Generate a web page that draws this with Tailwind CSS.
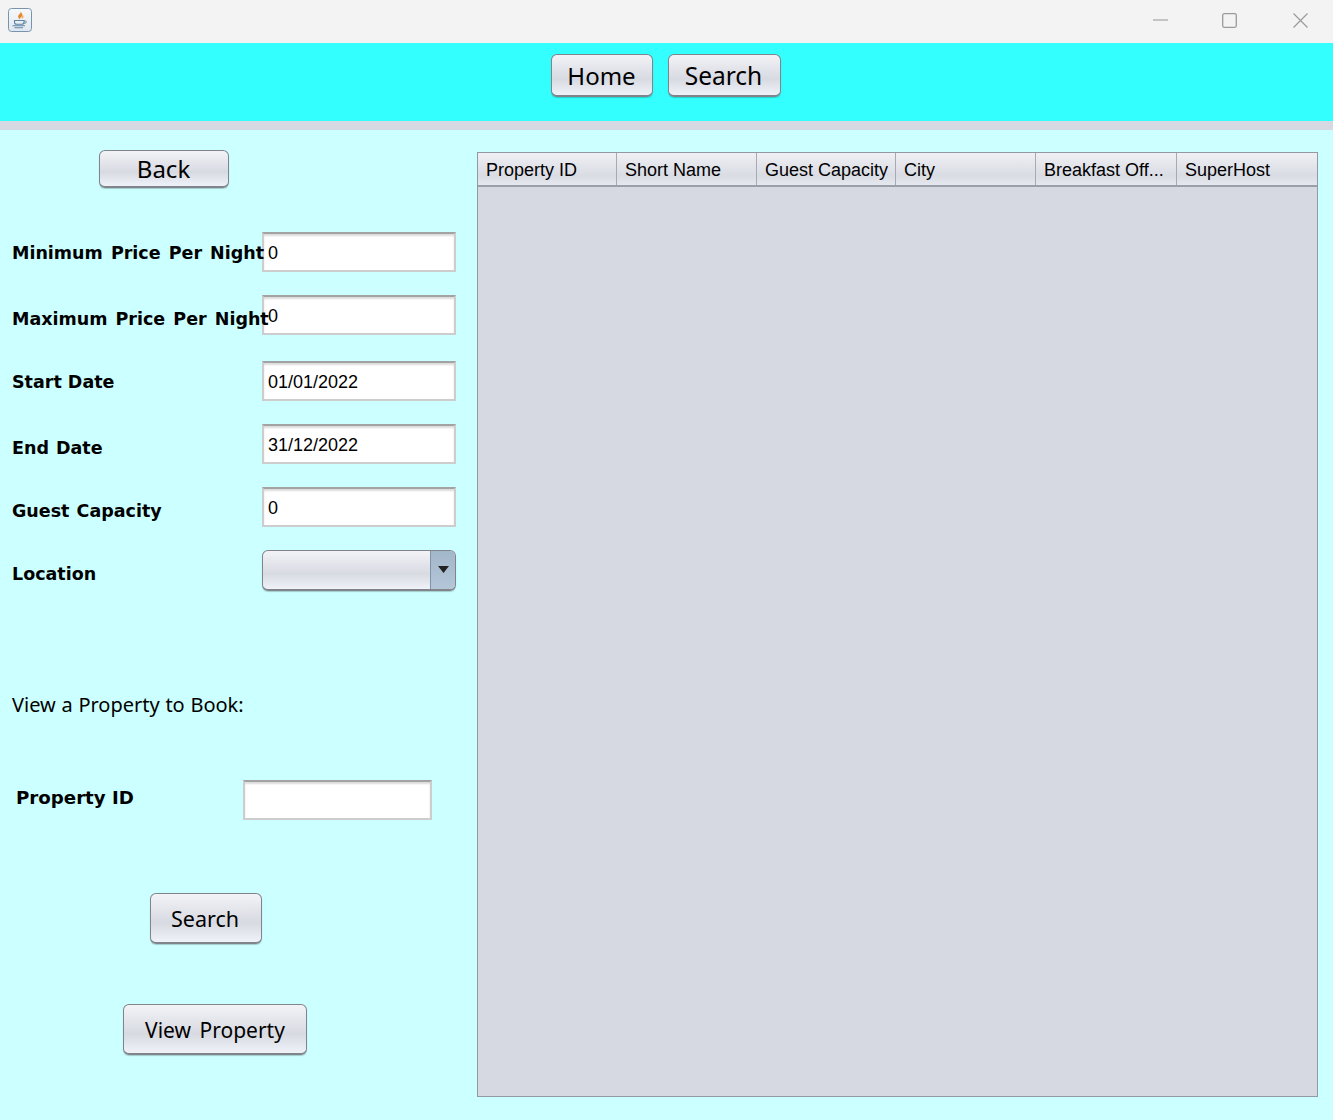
<!DOCTYPE html>
<html lang="en">
<head>
  <meta charset="UTF-8" />
  <title>Search Properties</title>
  <script src="https://cdn.jsdelivr.net/npm/@tailwindcss/browser@4"></script>
</head>
<body class="h-[1120px] w-[1333px] overflow-hidden bg-[#ccffff] font-['Noto_Sans',sans-serif] text-black">

  <!-- window title bar -->
  <div class="flex h-[43px] items-center justify-between bg-[#f3f3f3] pl-[8px] pr-[25px] pb-[3px]">
    <svg class="mb-[1px]" width="24" height="24" viewBox="0 0 24 24">
      <defs>
        <linearGradient id="tile" x1="0" y1="0" x2="0" y2="1"><stop offset="0" stop-color="#f7f9fb" /><stop offset="1" stop-color="#dfe7ee" /></linearGradient>
      </defs>
      <rect x="0.500" y="0.500" width="23" height="23" rx="3" fill="url(#tile)" stroke="#7793ad" />
      <path d="M12.500 3.500c1.200 1.800-2.800 3-2.300 5.500.2 1 .9 1.800 1.500 2.500-.2-1.800 3.300-3 2.500-5.300-.3-1-1-2-1.700-2.700z" fill="#e8862a" />
      <path d="M14.500 6.500c.8 1-1.200 2-.9 3.300.1.500.4 1 .7 1.300 0-1 1.600-1.800 1.200-3.100-.1-.6-.5-1.100-1-1.500z" fill="#f0a65a" />
      <path d="M6.500 12.500h9.500v1.800c0 1.200-1 2-2.200 2H8.700c-1.200 0-2.200-.8-2.200-2z" fill="none" stroke="#5f84a6" stroke-width="1.100" />
      <path d="M16 13h1.300c1.500 0 1.400 2.200-.5 2.200H15.500" fill="none" stroke="#5f84a6" stroke-width="1" />
      <path d="M4.500 17.800h12.500M6.500 19.800h8.500" stroke="#5f84a6" stroke-width="1.100" fill="none" />
    </svg>
    <div class="flex items-center">
      <svg width="15" height="2" viewBox="0 0 15 2"><path d="M0 1h15" stroke="#a3a3a3" stroke-width="1.200" /></svg>
      <svg class="ml-[54px]" width="15" height="15" viewBox="0 0 15 15"><rect x="0.700" y="0.700" width="13.600" height="13.600" rx="1.500" fill="none" stroke="#9a9a9a" stroke-width="1.300" /></svg>
      <svg class="ml-[56px]" width="15" height="15" viewBox="0 0 15 15"><path d="M0.500 0.500l14 14M14.500 0.500l-14 14" stroke="#9a9a9a" stroke-width="1.200" fill="none" /></svg>
    </div>
  </div>

  <!-- top nav -->
  <div class="flex h-[78px] items-start justify-center gap-[15px] bg-[#33ffff] pt-[11px] pr-[2px]">
    <button class="h-[43px] w-[102px] rounded-[6px] border border-b-2 border-[#80858c] bg-linear-to-b from-[#f3f3f7] via-[#d8dae2] via-60% to-[#f0f2fa] pt-[2px] text-[24px] leading-none shadow-[0_1px_1px_#0003]">Home</button>
    <button class="h-[43px] w-[113px] rounded-[6px] border border-b-2 border-[#80858c] bg-linear-to-b from-[#f3f3f7] via-[#d8dae2] via-60% to-[#f0f2fa] pt-[2px] pr-[1px] text-[24.500px] leading-none shadow-[0_1px_1px_#0003]">Search</button>
  </div>
  <div class="h-[9px] bg-[#d6d9e2]"></div>

  <main class="flex h-[990px]">
    <!-- filters -->
    <section class="w-[477px] shrink-0 pt-[20px]">
      <button class="ml-[99px] block h-[38px] w-[130px] rounded-[6px] border border-b-2 border-[#80858c] bg-linear-to-b from-[#f3f3f7] via-[#d8dae2] via-60% to-[#f0f2fa] pt-[1px] pr-[1px] text-[24px] leading-none shadow-[0_1px_1px_#0003]">Back</button>

      <div class="mt-[44px] flex h-[40px] items-center pl-[12px]">
        <label class="relative z-10 w-[250px] shrink-0 whitespace-nowrap pt-[2px] font-['DejaVu_Sans',sans-serif] text-[17.500px] font-bold [word-spacing:2px]">Minimum Price Per Night</label>
        <div class="flex h-[40px] w-[194px] items-center border-2 border-[#cdcdcd] border-t-[#a3a3a3] bg-white pl-[4px] pt-[2px] font-['Liberation_Sans',sans-serif] text-[18px] shadow-[inset_0_2px_2px_#dcdcdc]">0</div>
      </div>

      <div class="mt-[23px] flex h-[40px] items-center pl-[12px]">
        <label class="relative z-10 w-[250px] shrink-0 whitespace-nowrap pt-[8px] font-['DejaVu_Sans',sans-serif] text-[17.500px] font-bold [word-spacing:2px]">Maximum Price Per Night</label>
        <div class="flex h-[40px] w-[194px] items-center border-2 border-[#cdcdcd] border-t-[#a3a3a3] bg-white pl-[4px] pt-[2px] font-['Liberation_Sans',sans-serif] text-[18px] shadow-[inset_0_2px_2px_#dcdcdc]">0</div>
      </div>

      <div class="mt-[26px] flex h-[40px] items-center pl-[12px]">
        <label class="w-[250px] shrink-0 whitespace-nowrap pt-[2px] font-['DejaVu_Sans',sans-serif] text-[17.500px] font-bold">Start Date</label>
        <div class="flex h-[40px] w-[194px] items-center border-2 border-[#cdcdcd] border-t-[#a3a3a3] bg-white pl-[4px] pt-[2px] font-['Liberation_Sans',sans-serif] text-[18px] shadow-[inset_0_2px_2px_#dcdcdc]">01/01/2022</div>
      </div>

      <div class="mt-[23px] flex h-[40px] items-center pl-[12px]">
        <label class="w-[250px] shrink-0 whitespace-nowrap pt-[8px] font-['DejaVu_Sans',sans-serif] text-[17.500px] font-bold [word-spacing:1px]">End Date</label>
        <div class="flex h-[40px] w-[194px] items-center border-2 border-[#cdcdcd] border-t-[#a3a3a3] bg-white pl-[4px] pt-[2px] font-['Liberation_Sans',sans-serif] text-[18px] shadow-[inset_0_2px_2px_#dcdcdc]">31/12/2022</div>
      </div>

      <div class="mt-[23px] flex h-[40px] items-center pl-[12px]">
        <label class="w-[250px] shrink-0 whitespace-nowrap pt-[8px] font-['DejaVu_Sans',sans-serif] text-[17.500px] font-bold [word-spacing:1px]">Guest Capacity</label>
        <div class="flex h-[40px] w-[194px] items-center border-2 border-[#cdcdcd] border-t-[#a3a3a3] bg-white pl-[4px] pt-[2px] font-['Liberation_Sans',sans-serif] text-[18px] shadow-[inset_0_2px_2px_#dcdcdc]">0</div>
      </div>

      <div class="mt-[23px] flex h-[40px] items-center pl-[12px]">
        <label class="w-[250px] shrink-0 whitespace-nowrap pt-[8px] font-['DejaVu_Sans',sans-serif] text-[17.500px] font-bold">Location</label>
        <div class="flex h-[41px] w-[194px] overflow-hidden rounded-[6px] border border-b-2 border-[#80858c] bg-linear-to-b from-[#f3f3f7] via-[#d8dae2] via-60% to-[#f0f2fa] shadow-[0_1px_1px_#0003]">
          <div class="flex-1"></div>
          <div class="flex w-[25px] items-center justify-center border-l border-[#7f94aa] bg-linear-to-b from-[#a3b7ca] to-[#b4c6d8]">
            <svg width="11" height="7" viewBox="0 0 11 7"><path d="M0 0h11L5.500 7z" fill="#222" /></svg>
          </div>
        </div>
      </div>

      <p class="mt-[100px] h-[30px] pl-[12px] text-[20px] leading-[30px] [word-spacing:0.500px]">View a Property to Book:</p>

      <div class="mt-[60px] flex h-[40px] items-center pl-[16px]">
        <label class="w-[227px] shrink-0 whitespace-nowrap pb-[4px] font-['DejaVu_Sans',sans-serif] text-[18.200px] font-bold">Property ID</label>
        <div class="h-[40px] w-[189px] border-2 border-[#cdcdcd] border-t-[#a3a3a3] bg-white shadow-[inset_0_2px_2px_#dcdcdc]"></div>
      </div>

      <button class="ml-[150px] mt-[73px] block h-[51px] w-[112px] rounded-[6px] border border-b-2 border-[#80858c] bg-linear-to-b from-[#f3f3f7] via-[#d8dae2] via-60% to-[#f0f2fa] pt-[2px] pr-[2px] text-[21.500px] leading-none shadow-[0_1px_1px_#0003]">Search</button>
      <button class="ml-[123px] mt-[60px] block h-[51px] w-[184px] rounded-[6px] border border-b-2 border-[#80858c] bg-linear-to-b from-[#f3f3f7] via-[#d8dae2] via-60% to-[#f0f2fa] pt-[2px] text-[21px] leading-none shadow-[0_1px_1px_#0003] [word-spacing:3px]">View Property</button>
    </section>

    <!-- results table -->
    <section class="mt-[22px] h-[945px] w-[841px] border border-[#8f9aa3] bg-[#d6d9e2]">
      <div class="flex h-[34px] border-b-2 border-[#9aa0a8] bg-linear-to-b from-[#f0f0f4] via-[#dadce4] via-70% to-[#e6e8f0] font-['Liberation_Sans',sans-serif] text-[18px] leading-[35px]">
        <div class="w-[139px] border-r border-[#a6abb3] pl-[8px]">Property ID</div>
        <div class="w-[140px] border-r border-[#a6abb3] pl-[8px]">Short Name</div>
        <div class="w-[139px] border-r border-[#a6abb3] pl-[8px]">Guest Capacity</div>
        <div class="w-[140px] border-r border-[#a6abb3] pl-[8px]">City</div>
        <div class="w-[141px] border-r border-[#a6abb3] pl-[8px]">Breakfast Off...</div>
        <div class="flex-1 pl-[8px]">SuperHost</div>
      </div>
    </section>
  </main>
</body>
</html>
